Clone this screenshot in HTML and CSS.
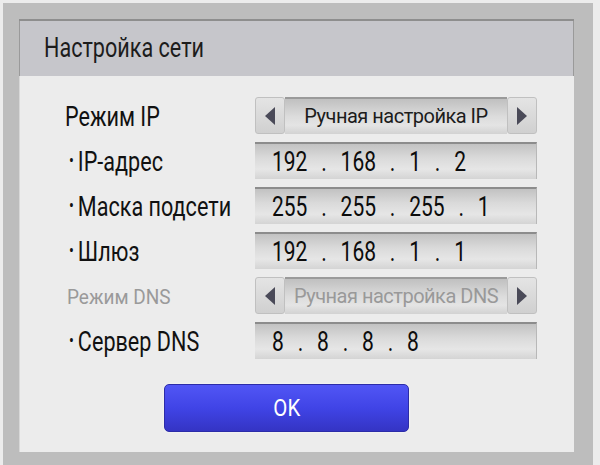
FILE: index.html
```html
<!DOCTYPE html>
<html lang="ru">
<head>
    <meta charset="UTF-8">
    <meta name="viewport" content="width=device-width, initial-scale=1.0">
    <title>Настройка сети</title>
    <link rel="stylesheet" href="styles.css">
</head>
<body>
    <div class="frame">
        <div class="dialog">
            <div class="header"><span>Настройка сети</span></div>
            <div class="content">
                <div class="row">
                    <div class="label"><span>Режим IP</span></div>
                    <div class="select">
                        <div class="arrow left"></div>
                        <div class="value">Ручная настройка IP</div>
                        <div class="arrow right"></div>
                    </div>
                </div>
                <div class="row">
                    <div class="label sub"><span>IP-адрес</span></div>
                    <div class="field"><span>192 . 168 . 1 . 2</span></div>
                </div>
                <div class="row">
                    <div class="label sub"><span>Маска подсети</span></div>
                    <div class="field"><span>255 . 255 . 255 . 1</span></div>
                </div>
                <div class="row">
                    <div class="label sub"><span>Шлюз</span></div>
                    <div class="field"><span>192 . 168 . 1 . 1</span></div>
                </div>
                <div class="row disabled">
                    <div class="label"><span>Режим DNS</span></div>
                    <div class="select">
                        <div class="arrow left"></div>
                        <div class="value">Ручная настройка DNS</div>
                        <div class="arrow right"></div>
                    </div>
                </div>
                <div class="row">
                    <div class="label sub"><span>Сервер DNS</span></div>
                    <div class="field"><span>8 . 8 . 8 . 8</span></div>
                </div>
                <div class="actions">
                    <button class="ok"><span>OK</span></button>
                </div>
            </div>
        </div>
    </div>
</body>
</html>
```

FILE: styles.css
```css
body {
    margin: 0;
    background: #ececec;
    font-family: Roboto, "Liberation Sans", sans-serif;
    color: #111;
}

/* the TV font is a narrow one, so text is squeezed a little */
.header span,
.label span,
.field span,
.ok span {
    display: inline-block;
    white-space: nowrap;
    transform-origin: left center;
}

.frame {
    margin: 3px 7px 0 3px;
    padding: 16px 19px 13px 16px;
    background: #bdbdbd;
}

.dialog {
    height: 433px;
    background: #ececec;
    box-shadow: inset 1px 0 0 #d8d8d8;
}

.header {
    height: 55px;
    padding-left: 25px;
    background: #c6c6cb;
    border-top: 2px solid #8e8e8e;
    box-shadow: inset 1px 0 0 #9a9a9a, inset -1px 0 0 #9a9a9a;
    font-size: 27px;
    line-height: 55px;
    color: #1c1c1c;
}

.header span {
    transform: scaleX(0.8);
}

.content {
    padding: 21px 37px 0 46px;
}

.row {
    display: flex;
    align-items: center;
    height: 37px;
    margin-bottom: 8px;
}

.label {
    width: 190px;
    font-size: 27px;
    padding-top: 2px;
    white-space: nowrap;
}

.label span {
    transform: scaleX(0.8);
}

.label.sub {
    padding-left: 4px;
    width: 186px;
}

.label.sub span::before {
    content: "\2022";
    font-size: 18px;
    margin-right: 5px;
    vertical-align: 4px;
}

.disabled .label {
    color: #9a9a9a;
    font-size: 20px;
    padding-left: 2px;
    width: 188px;
}

.disabled .label span {
    transform: scaleX(0.95);
}

.field {
    flex: 1;
    height: 37px;
    box-sizing: border-box;
    padding-left: 17px;
    border-top: 2px solid #8c8c8c;
    border-right: 1px solid #b8b8b8;
    background: linear-gradient(#c2c2c2, #dadada 40%, #e6e6e6 72%, #d4d4d4);
    font-size: 28px;
    line-height: 35px;
    color: #0c0c0c;
    white-space: nowrap;
    overflow: hidden;
}

.field span {
    transform: scaleX(0.75);
    word-spacing: 11.5px;
}

.select {
    flex: 1;
    display: flex;
    height: 37px;
}

.arrow {
    width: 30px;
    display: flex;
    align-items: center;
    justify-content: center;
    background: linear-gradient(#e4e4e4, #d0d0d0);
    border: 1px solid #c0c0c0;
    border-radius: 3px;
    box-sizing: border-box;
}

.arrow.left::after {
    content: "";
    border-top: 9px solid transparent;
    border-bottom: 9px solid transparent;
    border-right: 10px solid #4a4a58;
}

.arrow.right::after {
    content: "";
    border-top: 9px solid transparent;
    border-bottom: 9px solid transparent;
    border-left: 10px solid #4a4a58;
}

.value {
    flex: 1;
    text-align: center;
    border-top: 2px solid #9a9a9a;
    background: linear-gradient(#c0c0c0, #dcdcdc 50%, #e4e4e4 75%, #d2d2d2);
    font-size: 20px;
    line-height: 35px;
    letter-spacing: -0.5px;
    color: #1c1c1c;
    white-space: nowrap;
}

.disabled .value {
    color: #999;
}

.actions {
    padding: 17px 0 0 99px;
}

.ok {
    width: 245px;
    height: 48px;
    border: 1px solid #2c2ca8;
    border-radius: 5px;
    background: linear-gradient(#5156f5, #4044e6 50%, #3434c4);
    box-shadow: 0 0 2px #fff;
    color: #fff;
    font-family: Roboto, sans-serif;
    font-size: 24px;
}

.ok span {
    transform: scaleX(0.85);
    transform-origin: center;
}
```
